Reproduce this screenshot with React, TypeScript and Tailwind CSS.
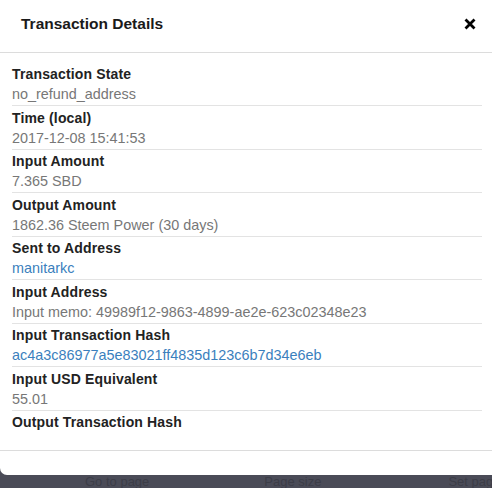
import React from 'react';

type Row = { label: string; value?: string; link?: boolean };

const rows: Row[] = [
  { label: 'Transaction State', value: 'no_refund_address' },
  { label: 'Time (local)', value: '2017-12-08 15:41:53' },
  { label: 'Input Amount', value: '7.365 SBD' },
  { label: 'Output Amount', value: '1862.36 Steem Power (30 days)' },
  { label: 'Sent to Address', value: 'manitarkc', link: true },
  { label: 'Input Address', value: 'Input memo: 49989f12-9863-4899-ae2e-623c02348e23' },
  { label: 'Input Transaction Hash', value: 'ac4a3c86977a5e83021ff4835d123c6b7d34e6eb', link: true },
  { label: 'Input USD Equivalent', value: '55.01' },
  { label: 'Output Transaction Hash' },
];

function CloseIcon() {
  return (
    <svg width="12" height="12" viewBox="0 0 12 12" className="block">
      <path d="M1.5 1.5 L10.5 10.5 M10.5 1.5 L1.5 10.5" stroke="#000" strokeWidth="2.8" />
    </svg>
  );
}

export default function App() {
  return (
    <div
      className="h-[488px] w-[492px] overflow-hidden bg-[#4a4b57]"
      style={{ fontFamily: '"Liberation Sans", Arial, sans-serif' }}
    >
      <div className="flex h-[475px] flex-col rounded-bl-[7px] bg-white">
        {/* header */}
        <div className="flex h-[53px] items-center justify-between border-b border-[#dcdcdc] pl-[21px] pr-[16px] pb-[5px]">
          <h4 className="text-[15.5px] font-bold leading-5 text-[#1a1a1a]">Transaction Details</h4>
          <button className="mt-[1px]">
            <CloseIcon />
          </button>
        </div>

        {/* body */}
        <div className="flex-1 pl-[12px] pr-[10px] pt-[9.5px]">
          {rows.map((r, i) => (
            <div
              key={r.label}
              className={
                i < rows.length - 1
                  ? 'border-b border-[#e3e3e3] pt-[1.5px] pb-px'
                  : 'pt-[1.5px] pb-px'
              }
            >
              <div className="text-[14px] font-bold leading-5 tracking-[0.15px] text-[#222]">{r.label}</div>
              {r.value && (
                <div
                  className={
                    r.link
                      ? 'text-[14.4px] leading-5 text-[#3b7fbd]'
                      : 'text-[14.4px] leading-5 text-[#777]'
                  }
                >
                  {r.value}
                </div>
              )}
            </div>
          ))}
        </div>

        {/* footer */}
        <div className="h-[25px] border-t border-[#dcdcdc]" />
      </div>

      {/* table pager behind the overlay */}
      <div className="flex h-[13px] items-end overflow-hidden whitespace-nowrap text-[13px] leading-[13px] text-[#3c3d47]">
        <span className="ml-[85px] shrink-0">Go to page</span>
        <span className="ml-[115px] shrink-0">Page size</span>
        <span className="ml-[127px] shrink-0">Set page size</span>
      </div>
    </div>
  );
}
